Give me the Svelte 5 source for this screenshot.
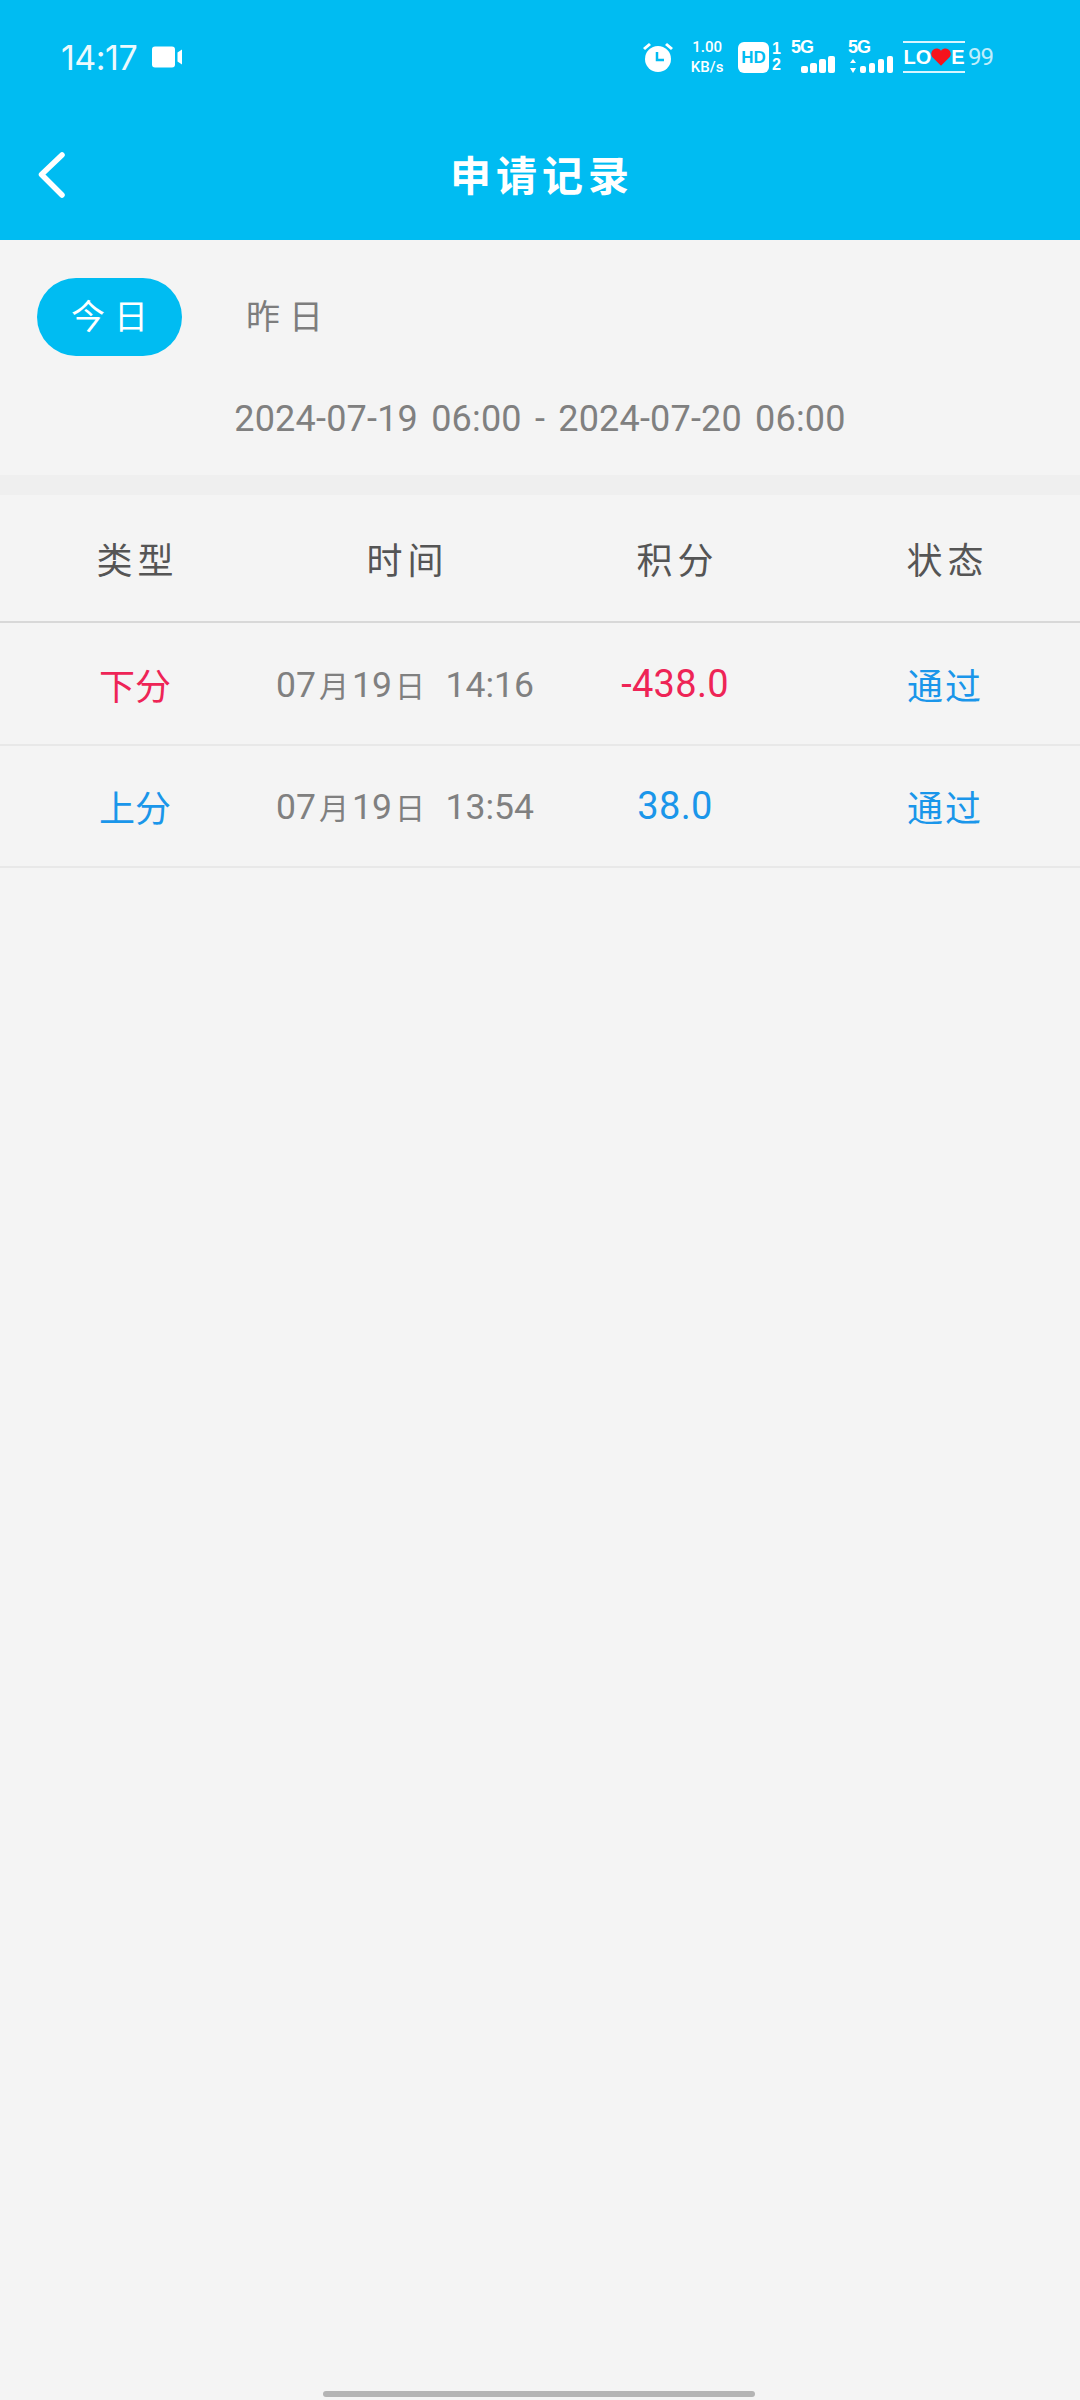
<script>
  const records = [
    { type: '下分', kind: 'down', date: '07', day: '19', time: '14:16', score: '-438.0', status: '通过' },
    { type: '上分', kind: 'up', date: '07', day: '19', time: '13:54', score: '38.0', status: '通过' }
  ];
  const cols = ['类型', '时间', '积分', '状态'];
  const bars = [7, 10, 14, 17];
</script>

<div class="page">
  <header class="header">
    <div class="status">
      <div class="status-left">
        <span class="clock">14:17</span>
        <svg class="cam" viewBox="0 0 31 22" width="31" height="22">
          <rect x="0" y="0.500" width="23" height="21" rx="3" fill="#fff" />
          <path d="M25.500 6.500 30 3.500v15l-4.500-3z" fill="#fff" />
        </svg>
      </div>
      <div class="status-right">
        <svg class="alarm" viewBox="0 0 32 32" width="32" height="32">
          <circle cx="16" cy="18" r="13" fill="#fff" />
          <path d="M1 7 7 2l2 2-6 5zM31 7l-6-5-2 2 6 5z" fill="#fff" />
          <path d="M15 11v8h7" fill="none" stroke="#00bcf2" stroke-width="2.500" />
        </svg>
        <div class="speed"><span>1.00</span><span>KB/s</span></div>
        <div class="hd"><span class="hd-box">HD</span><span class="hd-nums"><i>1</i><i>2</i></span></div>
        <div class="signal">
          <span class="net">5G</span>
          <div class="bars">
            {#each bars as h}<b style="height:{h}px"></b>{/each}
          </div>
        </div>
        <div class="signal second">
          <span class="net">5G</span>
          <svg class="updown" viewBox="0 0 8 14" width="8" height="14"><path d="M4 0l3 4H1zM4 14l3-5H1z" fill="#fff" /></svg>
          <div class="bars">
            {#each bars as h}<b style="height:{h}px"></b>{/each}
          </div>
        </div>
        <div class="battery">
          <span class="love">LO<svg viewBox="0 0 16 14" width="20" height="18"><path d="M8 14 1 7a4 4 0 0 1 7-5 4 4 0 0 1 7 5z" fill="#f5131c" /></svg>E</span>
        </div>
        <span class="level">99</span>
      </div>
    </div>
    <div class="titlebar">
      <svg class="back" viewBox="0 0 30 50" width="30" height="50">
        <path d="M24 5 3.500 24.500 24 45" fill="none" stroke="#fff" stroke-width="5.500" stroke-linecap="round" stroke-linejoin="round" />
      </svg>
      <h1>申请记录</h1>
    </div>
  </header>

  <section class="filter">
    <div class="tabs">
      <button class="tab active">今日</button>
      <button class="tab">昨日</button>
    </div>
    <p class="range">2024-07-19 06:00 - 2024-07-20 06:00</p>
  </section>

  <div class="table">
    <div class="row head">
      {#each cols as c}<span>{c}</span>{/each}
    </div>
    {#each records as r}
      <div class="row item">
        <span class={r.kind}>{r.type}</span>
        <span class="when">{r.date}<small>月</small>{r.day}<small>日</small>&nbsp; {r.time}</span>
        <span class="score {r.kind}">{r.score}</span>
        <span class="up pass">{r.status}</span>
      </div>
    {/each}
  </div>

  <div class="home"></div>
</div>

<style>
  :global(body) {
    margin: 0;
    background: #f4f4f4;
  }

  .page {
    position: relative;
    height: 2400px;
    display: flex;
    flex-direction: column;
    background: #f4f4f4;
    font-family: "Roboto", "Noto Sans CJK SC", sans-serif;
    overflow: hidden;
  }

  .header {
    height: 240px;
    flex: none;
    background: #00bcf2;
    color: #fff;
  }

  .status {
    height: 114px;
    display: flex;
    align-items: center;
    justify-content: space-between;
    padding: 0 87px 0 61px;
  }

  .status-left,
  .status-right {
    display: flex;
    align-items: center;
  }

  .clock {
    font-family: "Inter", sans-serif;
    font-size: 34px;
    letter-spacing: -0.5px;
    opacity: 0.92;
  }

  .cam {
    margin-left: 15px;
  }

  .alarm {
    margin-right: 13px;
  }

  .speed {
    width: 40px;
    display: flex;
    flex-direction: column;
    align-items: center;
    font-family: "Roboto", sans-serif;
    font-size: 15px;
    font-weight: 500;
    line-height: 20px;
    white-space: nowrap;
  }

  .hd {
    display: flex;
    align-items: center;
    margin-left: 11px;
  }

  .hd-box {
    width: 31px;
    height: 31px;
    border-radius: 6px;
    background: #fff;
    color: #00bcf2;
    font-family: "Liberation Sans", sans-serif;
    font-weight: 700;
    font-size: 17px;
    line-height: 31px;
    text-align: center;
  }

  .hd-nums {
    display: flex;
    flex-direction: column;
    margin-left: 3px;
    font-family: "Liberation Sans", sans-serif;
    font-size: 16px;
    font-weight: 700;
    line-height: 16px;
  }

  .hd-nums i {
    font-style: normal;
  }

  .signal {
    position: relative;
    width: 44px;
    height: 32px;
    margin-left: 10px;
  }

  .signal.second {
    width: 45px;
    margin-left: 13px;
  }

  .net {
    position: absolute;
    left: 0;
    top: -4px;
    font-family: "Liberation Sans", sans-serif;
    font-size: 18px;
    font-weight: 700;
    letter-spacing: -1px;
  }

  .updown {
    position: absolute;
    left: 1px;
    bottom: 0;
  }

  .bars {
    position: absolute;
    right: 0;
    bottom: 0;
    display: flex;
    align-items: flex-end;
    gap: 2px;
  }

  .bars b {
    width: 7px;
    background: #fff;
    border-radius: 2px;
  }

  .signal.second .bars {
    gap: 3px;
  }

  .signal.second .bars b {
    width: 6px;
  }

  .battery {
    width: 62px;
    height: 28px;
    margin-left: 10px;
    display: flex;
    align-items: center;
    justify-content: center;
    border-top: 2px solid #d8f5ff;
    border-bottom: 2px solid #d8f5ff;
  }

  .love {
    display: flex;
    align-items: center;
    font-family: "Liberation Sans", sans-serif;
    font-size: 20px;
    font-weight: 700;
    line-height: 1;
  }

  .level {
    margin-left: 3px;
    font-family: "Roboto", sans-serif;
    font-size: 24px;
    letter-spacing: -1px;
    opacity: 0.75;
  }

  .titlebar {
    position: relative;
    height: 122px;
    display: flex;
    align-items: center;
    justify-content: center;
  }

  .back {
    position: absolute;
    left: 38px;
    top: 36px;
  }

  h1 {
    margin: -4px 0 0;
    font-size: 41px;
    font-weight: 700;
    letter-spacing: 5px;
    text-indent: 4px;
  }

  .filter {
    height: 255px;
    flex: none;
    box-sizing: border-box;
    padding: 38px 37px 0;
    border-bottom: 20px solid #efefef;
  }

  .tabs {
    display: flex;
    align-items: center;
  }

  .tab {
    width: 145px;
    height: 78px;
    padding: 0;
    border: 0;
    border-radius: 39px;
    background: none;
    color: #7d7d7d;
    font-family: inherit;
    font-size: 34px;
    line-height: 74px;
    letter-spacing: 9px;
    text-indent: 9px;
  }

  .tab + .tab {
    margin-left: 30px;
  }

  .tab.active {
    background: #00bcf2;
    color: #fff;
  }

  .range {
    margin: 41px 0 0;
    text-align: center;
    font-size: 36px;
    letter-spacing: 0.2px;
    word-spacing: 4px;
    line-height: 44px;
    color: #808080;
  }

  .row {
    display: grid;
    grid-template-columns: repeat(4, 270px);
    align-items: center;
    text-align: center;
    white-space: nowrap;
  }

  .head {
    height: 128px;
    box-sizing: border-box;
    border-bottom: 2px solid #d8d8d8;
    color: #555;
    font-size: 36px;
    letter-spacing: 5px;
  }

  .head span {
    text-indent: 5px;
  }

  .item {
    height: 123px;
    box-sizing: border-box;
    border-bottom: 2px solid #e8e8e8;
    font-size: 36px;
  }

  .item:last-child {
    height: 122px;
  }

  .when {
    color: #808080;
    font-size: 35.500px;
  }

  .when small {
    font-size: 30px;
    margin: 0 3px;
  }

  .score {
    font-size: 38px;
    letter-spacing: 0.3px;
  }

  .down {
    color: #ee2456;
  }

  .up {
    color: #1a96ea;
  }

  .pass {
    letter-spacing: 2px;
  }

  .home {
    position: absolute;
    left: 323px;
    bottom: 3px;
    width: 432px;
    height: 6px;
    border-radius: 3px;
    background: #b4b4b4;
  }
</style>
